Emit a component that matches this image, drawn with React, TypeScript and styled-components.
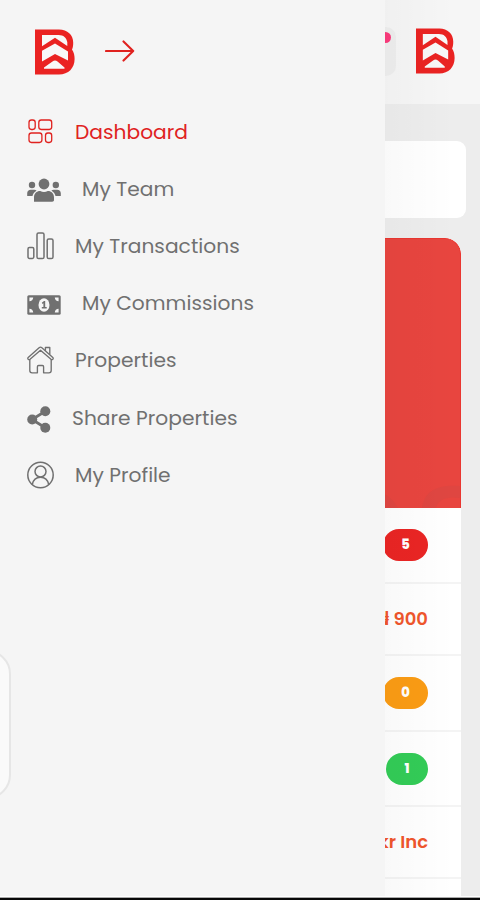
import React from "react";
import styled, { createGlobalStyle } from "styled-components";

const GlobalStyle = createGlobalStyle`
  * { box-sizing: border-box; }
  html, body { margin: 0; padding: 0; }
  body {
    overflow: hidden;
    font-family: Poppins, Inter, "Open Sans", sans-serif;
    background: #ededed;
  }
  svg { display: block; flex: none; }
`;

const Screen = styled.div`
  position: relative;
  width: 480px;
  height: 900px;
  overflow: hidden;
  display: flex;
  flex-direction: column;
  background: #ededed;
`;

const TopBar = styled.header`
  flex: none;
  display: flex;
  justify-content: flex-end;
  gap: 20px;
  height: 104px;
  padding: 27px 25px 0 0;
  background: #f6f6f6;
`;

const AlertButton = styled.div`
  position: relative;
  width: 48px;
  height: 49px;
  border-radius: 10px;
  background: #eeeeee;
`;

const AlertDot = styled.span`
  position: absolute;
  top: 5px;
  right: 5px;
  width: 11px;
  height: 11px;
  border-radius: 50%;
  background: #fb3b7c;
`;

const Content = styled.main`
  flex: 1;
  display: flex;
  flex-direction: column;
  padding: 37px 14px 0;
  min-height: 0;
`;

const SearchCard = styled.section`
  flex: none;
  height: 77px;
  border-radius: 9px;
  background: #fff;
`;

const SummaryCard = styled.section`
  flex: 1;
  margin: 20px 5px 0;
  min-height: 0;
  overflow: hidden;
  border-radius: 16px 16px 0 0;
  background: #fff;
`;

const Banner = styled.div`
  display: flex;
  justify-content: flex-end;
  align-items: flex-end;
  height: 270px;
  border: 1px solid #e93630;
  border-bottom: 0;
  border-radius: 16px 16px 0 0;
  background: #e8453f;
`;

const StatRow = styled.div<{ $h: number }>`
  display: flex;
  align-items: center;
  justify-content: flex-end;
  height: ${(p) => p.$h}px;
  padding-right: 33px;
  border-bottom: 2px solid #f4f4f4;
`;

const Pill = styled.span<{ $color: string; $w: number }>`
  display: flex;
  align-items: center;
  justify-content: center;
  width: ${(p) => p.$w}px;
  height: 32px;
  border-radius: 16px;
  background: ${(p) => p.$color};
  color: #fff;
  font-size: 13px;
  font-weight: 800;
`;

const Amount = styled.span`
  padding-bottom: 2px;
  color: #f0562c;
  font-size: 18px;
  font-weight: 600;
  white-space: nowrap;
`;

const Drawer = styled.aside`
  position: absolute;
  top: 0;
  left: 0;
  width: 385px;
  height: 897px;
  overflow: hidden;
  background: #f5f5f5;
`;

const DrawerShade = styled.div`
  position: absolute;
  top: 0;
  left: 385px;
  width: 70px;
  height: 897px;
  background: linear-gradient(90deg, rgba(0, 0, 0, 0.022), rgba(0, 0, 0, 0));
`;

const DrawerHead = styled.div`
  display: flex;
  align-items: center;
  gap: 30px;
  height: 103px;
  padding-left: 35px;
`;

const HeadArrow = styled.svg`
  margin-bottom: 2px;
`;

const Menu = styled.nav`
  display: flex;
  flex-direction: column;
  padding-left: 26.5px;
`;

const MenuItem = styled.a<{ $active?: boolean }>`
  display: flex;
  align-items: center;
  gap: 21.5px;
  height: 57.2px;
  color: ${(p) => (p.$active ? "#e0221f" : "#707070")};
`;

const IconSlot = styled.span<{ $drop?: number }>`
  flex: none;
  padding-top: ${(p) => p.$drop ?? 0}px;
`;

const Label = styled.span`
  font-size: 20.2px;
  line-height: 28px;
  letter-spacing: 0.03px;
  white-space: nowrap;
`;

const SideHandle = styled.div`
  position: absolute;
  left: -49px;
  top: 650px;
  width: 60px;
  height: 149px;
  border: 2px solid #e6e6e6;
  border-radius: 24px;
  background: #fafafa;
`;

const SystemBar = styled.div`
  position: absolute;
  left: 0;
  right: 0;
  bottom: 0;
  height: 4px;
  background: linear-gradient(#fff 0 1px, #aaa 1px 2px, #080808 2px);
`;

const Logo = ({ width = 40 }: { width?: number }) => (
  <svg width={width} height="47" viewBox="0 0 40 47" preserveAspectRatio="none">
    <path
      fill="#ea2322"
      d="M0 1.5H24C32.5 1.5 38.2 7 38.2 14.5C38.2 17.5 38 19.3 37 21.5C39 24.5 39.6 27.5 39.6 31C39.6 40 33.5 46.5 24 46.5H0Z"
    />
    <path
      fill="#f8f8f8"
      d="M7 7H23.5C28.5 7 31.6 9.8 32.3 14.2V18L20 9.8L7 18.2ZM7 22.8L20 15.4L33 23.4V32.6L20 26L7 33.4ZM9 40.8V39.4L17.5 33.4Q20 31.8 22.5 33.4L29.5 39.4V40.8Z"
    />
  </svg>
);

const line = { fill: "none", stroke: "currentColor", strokeWidth: 1.5 };

const DashboardIcon = () => (
  <svg width="27" height="27" viewBox="0 0 27 27" {...line} strokeWidth={1.3}>
    <rect x="2" y="2" width="6.2" height="9.5" rx="2.4" />
    <rect x="11.8" y="2" width="12.9" height="9.5" rx="2.4" />
    <rect x="2" y="15" width="12.9" height="9.5" rx="2.4" />
    <rect x="18.5" y="15" width="6.2" height="9.5" rx="2.4" />
  </svg>
);

const TeamIcon = () => (
  <svg width="34" height="26" viewBox="0 0 34 26" fill="currentColor">
    <circle cx="17" cy="7" r="5.4" />
    <circle cx="5" cy="8" r="3.2" />
    <circle cx="28.8" cy="8" r="3.2" />
    <path d="M7 24.7V20.5C7 16.5 9.5 14 13.2 14C15.6 15.2 18.4 15.2 20.8 14C24.5 14 27 16.5 27 20.5V23C27 24.1 26.3 24.7 25.2 24.7Z" />
    <path d="M.2 19V16.3C.2 14 1.7 12.8 3.8 12.8H7.3C8.3 12.8 9 13.1 9.6 13.7C7.3 15 5.9 16.8 5.5 19ZM33.8 19V16.3C33.8 14 32.3 12.8 30.2 12.8H26.7C25.7 12.8 25 13.1 24.4 13.7C26.7 15 28.1 16.8 28.5 19Z" />
  </svg>
);

const ChartIcon = () => (
  <svg width="27" height="28" viewBox="0 0 27 28" {...line}>
    <rect x="1" y="15.5" width="5.8" height="11" rx="1.4" />
    <rect x="10" y="1" width="7" height="25.5" rx="1.6" />
    <rect x="20.2" y="7" width="5.8" height="19.5" rx="1.6" />
  </svg>
);

const MoneyIcon = () => (
  <svg width="34" height="20" viewBox="0 0 34 20">
    <rect x=".3" y=".3" width="33.4" height="19.4" rx="1.5" fill="currentColor" />
    <path
      fill="#f5f5f5"
      d="M2.4 2.4H6.2C6.2 4.5 4.5 6.2 2.4 6.2ZM31.6 2.4H27.8C27.8 4.5 29.5 6.2 31.6 6.2ZM2.4 17.6H6.2C6.2 15.5 4.5 13.8 2.4 13.8ZM31.6 17.6H27.8C27.8 15.5 29.5 13.8 31.6 13.8Z"
    />
    <ellipse cx="17" cy="10" rx="5.5" ry="6.7" fill="#f5f5f5" />
    <path fill="currentColor" d="M14.8 7.7L17 6H18.2V12H19.7V13.5H14.8V12H16.4V8.3L15.5 9Z" />
  </svg>
);

const HomeIcon = () => (
  <svg width="27" height="28" viewBox="0 0 27 28" {...line} strokeWidth={1.35} strokeLinejoin="round">
    <path d="M12.1 1.7Q13.5.5 14.9 1.7L25.8 11.4Q26.6 12.3 25.8 13.2Q25 14 24 13.2L13.5 4.2L3 13.2Q2 14 1.2 13.2Q.4 12.3 1.2 11.4Z" />
    <path d="M18.4 4.7V1.5H22.8V8.6" />
    <path d="M2.8 13.5V24.5Q2.8 26.8 5.1 26.8H10.4V20.7Q10.4 19.5 11.6 19.5H15.4Q16.6 19.5 16.6 20.7V26.8H21.9Q24.2 26.8 24.2 24.5V13.5" />
  </svg>
);

const ShareIcon = () => (
  <svg width="24" height="27" viewBox="0 0 24 27" fill="currentColor">
    <path d="M18.3 5.3L5 13.5L18.3 21.7" fill="none" stroke="currentColor" strokeWidth="2.8" />
    <circle cx="18.3" cy="5.3" r="5" />
    <circle cx="5.2" cy="13.5" r="5" />
    <circle cx="18.3" cy="21.7" r="5" />
  </svg>
);

const ProfileIcon = () => (
  <svg width="27" height="28" viewBox="0 0 27 28" {...line}>
    <circle cx="13.5" cy="14" r="12.7" />
    <circle cx="13.5" cy="10.5" r="5.5" />
    <path d="M5.3 23.5C6.2 18.8 9.3 16.2 13.5 16.2S20.8 18.8 21.7 23.5" />
  </svg>
);

const items = [
  { label: "Dashboard", Icon: DashboardIcon, active: true },
  { label: "My Team", Icon: TeamIcon, drop: 3 },
  { label: "My Transactions", Icon: ChartIcon },
  { label: "My Commissions", Icon: MoneyIcon, drop: 3 },
  { label: "Properties", Icon: HomeIcon },
  { label: "Share Properties", Icon: ShareIcon, drop: 3 },
  { label: "My Profile", Icon: ProfileIcon },
];

export default function App() {
  return (
    <>
      <GlobalStyle />
      <Screen>
        <TopBar>
          <AlertButton>
            <AlertDot />
          </AlertButton>
          <Logo width={39} />
        </TopBar>
        <Content>
          <SearchCard />
          <SummaryCard>
            <Banner>
              <svg width="90" height="30" viewBox="0 0 90 30">
                <path d="M0 30V14Q18 12 28 30ZM52 30C54 14 66 6 90 8V20C76 18 68 22 66 30Z" fill="#c94a45" opacity=".3" />
              </svg>
            </Banner>
            <StatRow $h={76}><Pill $color="#ea2524" $w={45}>5</Pill></StatRow>
            <StatRow $h={72}><Amount>₦ 900</Amount></StatRow>
            <StatRow $h={76}><Pill $color="#fb9c14" $w={45}>0</Pill></StatRow>
            <StatRow $h={75}><Pill $color="#33cc57" $w={42}>1</Pill></StatRow>
            <StatRow $h={72}><Amount>Brokr Inc</Amount></StatRow>
          </SummaryCard>
        </Content>
        <DrawerShade />
        <Drawer>
          <DrawerHead>
            <Logo />
            <HeadArrow width="30" height="24" viewBox="0 0 30 24" fill="none" stroke="#e0221f" strokeWidth="2.1" strokeLinecap="round" strokeLinejoin="round">
              <path d="M1 12H28M18.5 2.4L28.2 12L18.5 21.6" />
            </HeadArrow>
          </DrawerHead>
          <Menu>
            {items.map(({ label, Icon, active, drop }) => (
              <MenuItem key={label} $active={active}>
                <IconSlot $drop={drop}>
                  <Icon />
                </IconSlot>
                <Label>{label}</Label>
              </MenuItem>
            ))}
          </Menu>
          <SideHandle />
        </Drawer>
        <SystemBar />
      </Screen>
    </>
  );
}
